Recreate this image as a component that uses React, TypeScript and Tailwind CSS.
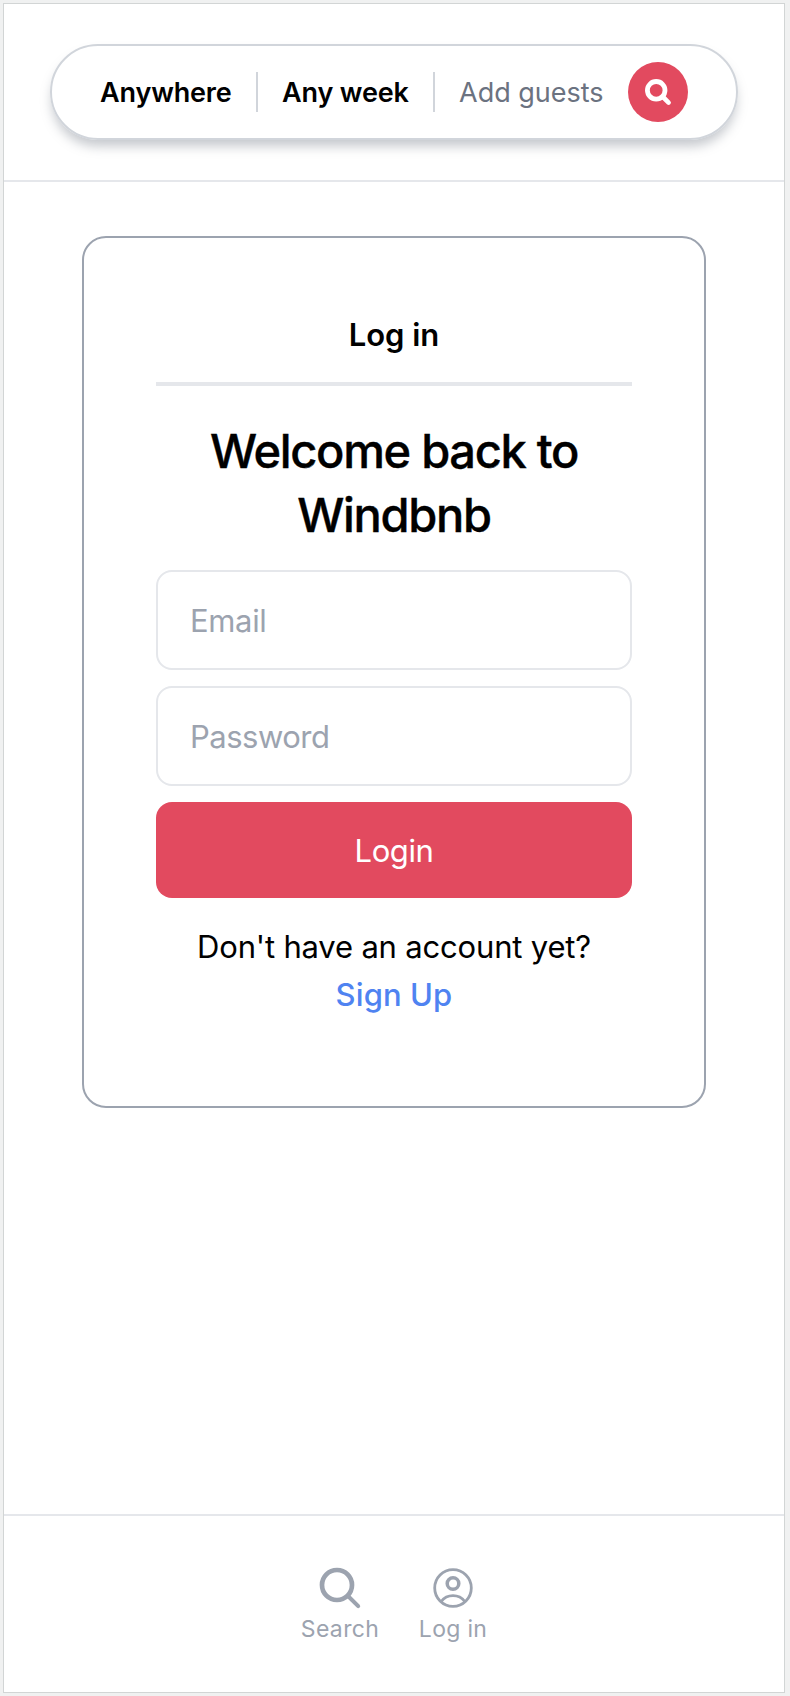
import React from "react";

function PillSearchIcon() {
  return (
    <svg className="size-8" viewBox="0 0 32 32" fill="none" stroke="currentColor" strokeWidth="4.8" strokeLinecap="round">
      <circle cx="14.2" cy="14.3" r="8.8" />
      <path d="M21 21L26.6 26.6" strokeWidth="4.6" />
    </svg>
  );
}

function SearchIcon() {
  return (
    <svg className="size-12" viewBox="0 0 48 48" fill="none" stroke="currentColor" strokeWidth="4.7" strokeLinecap="round">
      <circle cx="21" cy="21" r="15" />
      <path d="M32 32L42.2 42.2" strokeWidth="4" />
    </svg>
  );
}

function UserIcon() {
  return (
    <svg className="size-12" viewBox="0 0 48 48" fill="none" stroke="currentColor" strokeWidth="2.8">
      <circle cx="24" cy="24" r="18.3" />
      <circle cx="24" cy="19.5" r="5.8" strokeWidth="3.5" />
      <path d="M12.2 37.5C18 29.7 30 29.7 35.8 37.5" />
    </svg>
  );
}

export default function App() {
  return (
    <div className="h-[1696px] w-[790px] bg-[#f0f1f1] pl-[3px] pt-[3px] font-['Inter',sans-serif] text-black">
      <div className="flex h-[1690px] w-[782px] flex-col border border-[#d2d5d5] bg-white">
        <header className="flex h-[178px] justify-center border-b-2 border-gray-200 pt-10">
          <div className="flex h-24 w-[688px] items-center rounded-full border-2 border-[#d1d5db] pl-12 text-[27px] shadow-[0_8px_12px_-2px_rgba(107,114,128,0.4)]">
            <span className="w-[156px] whitespace-nowrap pt-0.5 font-semibold tracking-[-0.15px]">Anywhere</span>
            <span className="h-10 w-0.5 bg-[#d1d5db]" />
            <span className="ml-6 w-[151px] whitespace-nowrap pt-0.5 font-semibold tracking-[-0.15px]">Any week</span>
            <span className="h-10 w-0.5 bg-[#d1d5db]" />
            <span className="ml-6 w-[169px] whitespace-nowrap pt-0.5 text-[#6b7280]">Add guests</span>
            <button className="flex size-[60px] items-center justify-center rounded-full bg-[#e24a5f] text-white">
              <PillSearchIcon />
            </button>
          </div>
        </header>

        <main className="flex-1 pl-[78px] pt-[54px]">
          <section className="flex h-[872px] w-[624px] flex-col rounded-3xl border-2 border-[#9ca3af] px-[72px] pt-[72px] text-[31px]">
            <h2 className="h-[76px] border-b-4 border-gray-200 pt-[3px] text-center font-semibold leading-[44px] tracking-[-0.05px]">Log in</h2>
            <h1 className="mt-[33px] text-center text-[47px] font-medium leading-16 tracking-[-1.3px] [-webkit-text-stroke:0.4px_black]">
              Welcome back to
              <br />
              Windbnb
            </h1>
            <input
              className="mt-[23px] h-[100px] shrink-0 rounded-2xl border-2 border-gray-200 px-8 tracking-[-0.35px] placeholder:text-[#9ca3af]"
              placeholder="Email"
            />
            <input
              className="mt-4 h-[100px] shrink-0 rounded-2xl border-2 border-gray-200 px-8 tracking-[-0.5px] placeholder:text-[#9ca3af]"
              placeholder="Password"
            />
            <button className="mt-4 h-24 shrink-0 rounded-2xl bg-[#e24a5f] pt-0.5 tracking-[-0.4px] text-white">Login</button>
            <p className="mt-[25px] text-center leading-12 tracking-[-0.18px]">Don't have an account yet?</p>
            <a className="text-center font-medium leading-12 tracking-[0.1px] text-[#4f83f1]">Sign Up</a>
          </section>
        </main>

        <footer className="flex h-[178px] justify-center border-t-2 border-gray-200 pt-12 text-[23px] text-[#9ca3af]">
          <div className="flex w-[78px] flex-col items-center">
            <SearchIcon />
            <span className="whitespace-nowrap pt-px leading-8 tracking-[0.35px]">Search</span>
          </div>
          <div className="ml-10 flex w-[68px] flex-col items-center">
            <UserIcon />
            <span className="whitespace-nowrap pt-px leading-8 tracking-[0.3px]">Log in</span>
          </div>
        </footer>
      </div>
    </div>
  );
}
